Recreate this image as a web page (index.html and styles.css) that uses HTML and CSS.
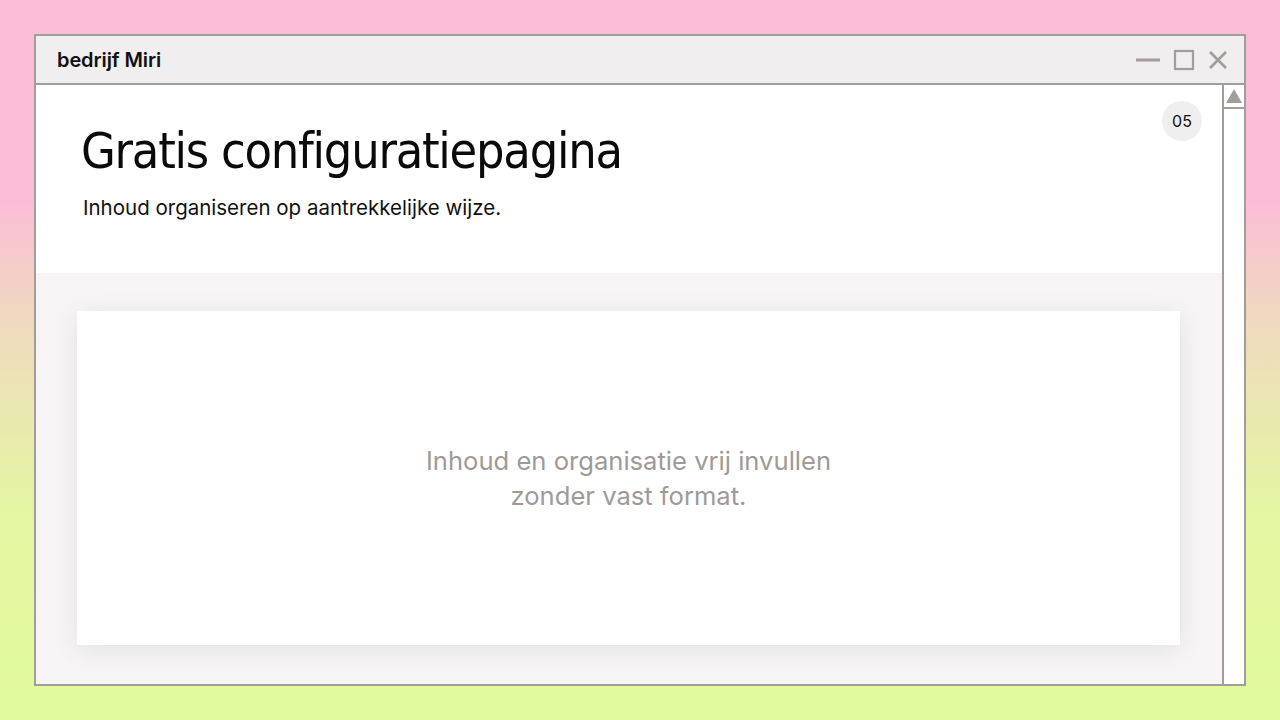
FILE: index.html
```
<!DOCTYPE html>
<html lang="nl">
<head>
<meta charset="utf-8">
<title>bedrijf Miri</title>
<link rel="stylesheet" href="styles.css">
</head>
<body>
<div class="window">
  <div class="titlebar">
    <span class="app-name">bedrijf Miri</span>
    <div class="controls">
      <svg class="ctl" width="26" height="20" viewBox="0 0 26 20"><line x1="1" y1="10" x2="25" y2="10" stroke="#a19d9b" stroke-width="3"/></svg>
      <svg class="ctl" width="22" height="22" viewBox="0 0 22 22"><rect x="2" y="2" width="18" height="18" fill="none" stroke="#a19d9b" stroke-width="2.2"/></svg>
      <svg class="ctl" width="22" height="22" viewBox="0 0 22 22"><path d="M3 3 L19 19 M19 3 L3 19" stroke="#a19d9b" stroke-width="2.6" fill="none"/></svg>
    </div>
  </div>
  <div class="body">
    <div class="main">
      <header class="head">
        <h1 class="title">Gratis configuratiepagina</h1>
        <p class="subtitle">Inhoud organiseren op aantrekkelijke wijze.</p>
        <span class="badge">05</span>
      </header>
      <section class="stage">
        <div class="card">
          <p class="card-text">Inhoud en organisatie vrij invullen<br>zonder vast format.</p>
        </div>
      </section>
    </div>
    <div class="scrollbar">
      <div class="scroll-up"><svg width="18" height="16" viewBox="0 0 18 16"><polygon points="9,1 17,15 1,15" fill="#a19d9b"/></svg></div>
    </div>
  </div>
</div>
</body>
</html>
```
FILE: styles.css
```
* { box-sizing: border-box; }
html, body { margin: 0; height: 100%; }
body {
  width: 1280px;
  height: 720px;
  padding: 34px;
  background: linear-gradient(180deg, #fbbcd6 0%, #fbbdd6 28%, #eedcbc 46%, #e4f5a2 70%, #e1fb9c 100%);
  font-family: Inter, "Noto Sans", sans-serif;
  overflow: hidden;
}
.window {
  width: 1212px;
  height: 652px;
  border: 2px solid #a19d9b;
  background: #fff;
  display: flex;
  flex-direction: column;
}
.titlebar {
  height: 49px;
  flex: 0 0 49px;
  background: #f0eeee;
  border-bottom: 2px solid #a19d9b;
  display: flex;
  align-items: center;
  justify-content: space-between;
  padding: 0 15px 0 21px;
}
.app-name {
  font-family: Inter, sans-serif;
  font-weight: 600;
  font-size: 20px;
  color: #111;
  letter-spacing: -0.1px;
}
.controls {
  display: flex;
  align-items: center;
  gap: 12px;
}
.ctl { display: block; }
.body {
  flex: 1;
  display: flex;
  min-height: 0;
}
.main {
  flex: 1;
  display: flex;
  flex-direction: column;
}
.head {
  position: relative;
  height: 188px;
  flex: 0 0 188px;
  background: #fff;
  padding: 36px 0 0 45px;
}
.title {
  margin: 0;
  font-family: "DejaVu Sans Condensed", "DejaVu Sans", sans-serif;
  font-weight: normal;
  font-size: 50px;
  line-height: 60px;
  color: #0a0a0a;
  letter-spacing: -1.25px;
}
.subtitle {
  margin: 14px 0 0 2px;
  font-size: 20.5px;
  color: #111;
  line-height: 26px;
}
.badge {
  position: absolute;
  top: 16px;
  right: 20px;
  width: 40px;
  height: 40px;
  border-radius: 50%;
  background: #f0eeee;
  display: flex;
  align-items: center;
  justify-content: center;
  font-size: 16px;
  color: #111;
}
.stage {
  flex: 1;
  background: #f6f4f4;
  padding: 38px 42px 39px 41px;
  display: flex;
}
.card {
  flex: 1;
  background: #fff;
  box-shadow: 0 4px 24px rgba(0,0,0,0.08);
  display: flex;
  align-items: center;
  justify-content: center;
}
.card-text {
  margin: 0;
  text-align: center;
  font-size: 25.6px;
  line-height: 35px;
  color: #9e9a98;
}
.scrollbar {
  width: 22px;
  flex: 0 0 22px;
  border-left: 2px solid #a19d9b;
  background: #fff;
}
.scroll-up {
  height: 24px;
  border-bottom: 2px solid #a19d9b;
  display: flex;
  align-items: center;
  justify-content: center;
}
.scroll-up svg { display: block; }
```
